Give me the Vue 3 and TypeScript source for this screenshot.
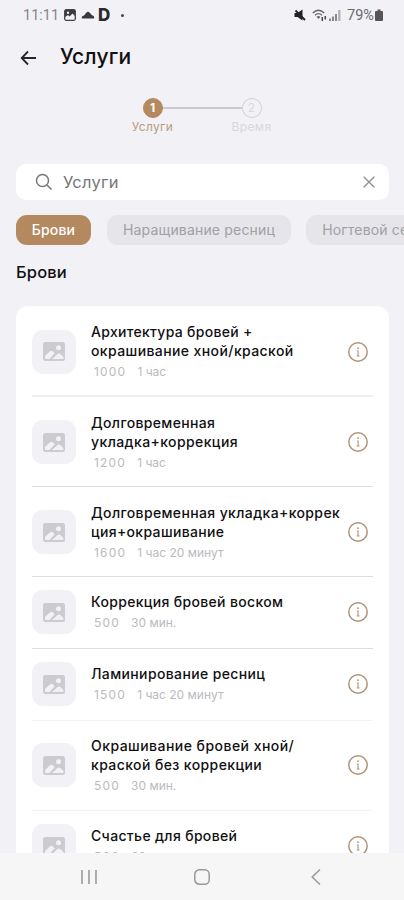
<script setup lang="ts">
interface Service {
  lines: { text: string; spacing: number }[]
  price: string
  duration: string
}

const services: Service[] = [
  {
    lines: [
      { text: 'Архитектура бровей +', spacing: 0.3 },
      { text: 'окрашивание хной/краской', spacing: 0.4 },
    ],
    price: '1000',
    duration: '1 час',
  },
  {
    lines: [
      { text: 'Долговременная', spacing: 0.35 },
      { text: 'укладка+коррекция', spacing: 0.4 },
    ],
    price: '1200',
    duration: '1 час',
  },
  {
    lines: [
      { text: 'Долговременная укладка+коррек', spacing: 0.37 },
      { text: 'ция+окрашивание', spacing: 0.33 },
    ],
    price: '1600',
    duration: '1 час 20 минут',
  },
  { lines: [{ text: 'Коррекция бровей воском', spacing: 0.33 }], price: '500', duration: '30 мин.' },
  { lines: [{ text: 'Ламинирование ресниц', spacing: 0.37 }], price: '1500', duration: '1 час 20 минут' },
  {
    lines: [
      { text: 'Окрашивание бровей хной/', spacing: 0.46 },
      { text: 'краской без коррекции', spacing: 0.4 },
    ],
    price: '500',
    duration: '30 мин.',
  },
  { lines: [{ text: 'Счастье для бровей', spacing: 0.34 }], price: '500', duration: '30 мин.' },
]
</script>

<template>
  <div class="screen">
    <header class="status">
      <span class="clock">11:11</span>
      <svg width="12" height="12" viewBox="0 0 12 12">
        <rect x="0.7" y="0.7" width="10.6" height="10.6" rx="1.5" fill="none" stroke="#444" stroke-width="1.3" />
        <path d="M1 1h10v6L8.5 4.5 5.5 7.5 4 6 1 8z" fill="#3a3a3c" />
        <circle cx="4" cy="3.8" r="1.2" fill="#f2f1f6" />
      </svg>
      <svg class="st-cloud" width="14" height="8" viewBox="0 0 14 8">
        <path d="M1 7.5Q0 5 3 4.5L5.5 1.5Q7 0 8.5 1.5L11 4.2Q14 5 13 7.5z" fill="#3a3a3c" />
      </svg>
      <span class="d">D</span>
      <span class="dot"></span>
      <span class="grow"></span>
      <svg width="12" height="12" viewBox="0 0 12 12">
        <path d="M0.5 4h3L8.5 0.5v11L3.5 8h-3z" fill="#222" />
        <path d="M1.500 1.500l9.500 9.500" stroke="#222" stroke-width="1.8" />
      </svg>
      <svg class="st-wifi" width="15" height="12" viewBox="0 0 15 12">
        <path d="M0.7 4Q6.5-1.5 12.3 4M3 6.2Q6.5 3 10 6.2" fill="none" stroke="#666" stroke-width="1.3" />
        <path d="M6.5 10L4.5 7.7Q6.5 6.3 8.5 7.7z" fill="#666" />
        <path d="M10.3 8v4M13.3 7v3.5" stroke="#444" stroke-width="1.5" />
      </svg>
      <svg class="st-signal" width="12" height="12" viewBox="0 0 12 12">
        <path d="M1 9.5V12M4 7.5V12M7 5V12" stroke="#777" stroke-width="1.7" />
        <path d="M10.3 1V12" stroke="#b0b0b4" stroke-width="2.2" />
      </svg>
      <span class="percent">79%</span>
      <svg width="8" height="12" viewBox="0 0 8 12">
        <path d="M2.5 0.5h3v1.500H7q1 0 1 1v8q0 1-1 1H1q-1 0-1-1V3q0-1 1-1h1.500z" fill="#555" />
      </svg>
    </header>

    <div class="topbar">
      <svg width="18" height="16" viewBox="0 0 18 16">
        <path d="M16 8H2M8 1.5L1.7 8 8 14.5" fill="none" stroke="#26262a" stroke-width="1.8" />
      </svg>
      <h1>Услуги</h1>
    </div>

    <div class="steps">
      <div class="step active">
        <span class="bullet">1</span>
        <span class="label">Услуги</span>
      </div>
      <span class="track"></span>
      <div class="step">
        <span class="bullet">2</span>
        <span class="label">Время</span>
      </div>
    </div>

    <div class="search">
      <svg width="18" height="18" viewBox="0 0 18 18">
        <circle cx="7.5" cy="7.5" r="6" fill="none" stroke="#777" stroke-width="1.5" />
        <path d="M12 12l4.5 4.5" stroke="#777" stroke-width="1.6" />
      </svg>
      <span class="query">Услуги</span>
      <svg width="12" height="12" viewBox="0 0 12 12">
        <path d="M0.7 0.7l10.6 10.6M11.3 0.7L0.7 11.3" stroke="#929296" stroke-width="1.4" />
      </svg>
    </div>

    <nav class="chips">
      <span class="chip on">Брови</span>
      <span class="chip">Наращивание ресниц</span>
      <span class="chip nails">Ногтевой сервис</span>
    </nav>

    <h2>Брови</h2>

    <main class="card">
      <article v-for="(s, i) in services" :key="i" class="row">
        <span class="thumb">
          <svg width="22" height="19" viewBox="0 0 22 19">
            <rect width="22" height="19" rx="2.5" fill="#cbcbd0" />
            <circle cx="15.5" cy="5.7" r="2.5" fill="#f2f2f6" />
            <path d="M2 16V14l5-4.7q1.5-1 2.7 0l2 2L6.5 17H3q-1 0-1-1zM9 17l6-5.2q1-.8 2 0l3.500 3.200V16q0 1-1 1z" fill="#f2f2f6" />
          </svg>
        </span>
        <div class="info">
          <div v-for="l in s.lines" :key="l.text" class="title" :style="{ letterSpacing: l.spacing + 'px' }">{{ l.text }}</div>
          <div class="meta"><span class="price">{{ s.price }}</span><span>{{ s.duration }}</span></div>
        </div>
        <svg width="20" height="20" viewBox="0 0 20 20">
          <circle cx="10" cy="10" r="9.2" fill="none" stroke="#b19478" stroke-width="1.5" />
          <path d="M8.9 9h1.200v5M8.7 14h2.800" fill="none" stroke="#b19478" stroke-width="1.1" />
          <circle cx="10" cy="6.2" r="0.9" fill="#b19478" />
        </svg>
      </article>
    </main>

    <footer class="system">
      <svg width="16" height="16" viewBox="0 0 16 16">
        <path d="M1 1v14M8 1v14M15 1v14" stroke="#a0a0a0" stroke-width="1.7" />
      </svg>
      <svg width="16" height="16" viewBox="0 0 16 16">
        <rect x="0.8" y="0.8" width="14.4" height="14.4" rx="4.5" fill="none" stroke="#999" stroke-width="1.5" />
      </svg>
      <svg width="10" height="16" viewBox="0 0 10 16">
        <path d="M9 0.5L1.2 8 9 15.5" fill="none" stroke="#999" stroke-width="1.5" />
      </svg>
    </footer>
  </div>
</template>

<style>
body {
  background: #f2f1f6;
}
</style>

<style scoped>
.screen {
  width: 404px;
  height: 900px;
  overflow: hidden;
  display: flex;
  flex-direction: column;
  background: #f2f1f6;
  font-family: Inter, 'Noto Sans', sans-serif;
  color: #101012;
}
svg {
  display: block;
  flex: none;
}
span {
  white-space: nowrap;
}
.status {
  height: 30px;
  flex: none;
  display: flex;
  align-items: center;
  box-sizing: border-box;
  padding: 0 21px 0 23px;
}
.clock {
  width: 41px;
  font-family: Roboto, sans-serif;
  font-size: 14.5px;
  color: #85858a;
}
.st-cloud {
  margin-left: 5px;
}
.d {
  margin-left: 3px;
  width: 16px;
  font-size: 17px;
  font-weight: 800;
  color: #2a2a2c;
}
.dot {
  width: 3px;
  height: 3px;
  margin-left: 7px;
  border-radius: 50%;
  background: #444;
}
.grow {
  flex: 1;
}
.st-wifi {
  margin-left: 6px;
}
.st-signal {
  margin-left: 2px;
}
.percent {
  width: 28px;
  margin-left: 6px;
  font-family: Roboto, sans-serif;
  font-size: 14.5px;
  color: #6a6a6e;
}
.topbar {
  height: 55px;
  flex: none;
  display: flex;
  align-items: center;
  gap: 22px;
  padding-left: 20px;
}
h1 {
  margin: -2px 0 0;
  font-size: 21px;
  line-height: 26px;
  letter-spacing: 0.2px;
  font-weight: 500;
}
.steps {
  height: 79px;
  flex: none;
  display: flex;
  justify-content: center;
  padding-top: 13px;
  box-sizing: border-box;
}
.step {
  width: 44px;
  display: flex;
  flex-direction: column;
  align-items: center;
  color: #d8d8dc;
}
.bullet {
  width: 20px;
  height: 20px;
  box-sizing: border-box;
  border: 1.5px solid #d3d3d7;
  border-radius: 50%;
  font-size: 12px;
  line-height: 17px;
  text-align: center;
}
.label {
  margin-top: 1px;
  font-size: 12px;
  line-height: 16px;
  letter-spacing: 0.35px;
}
.active {
  color: #b99c7d;
}
.active .bullet {
  background: #b5895f;
  border-color: #b5895f;
  color: #fff;
  font-weight: 700;
}
.track {
  width: 79px;
  height: 2px;
  margin: 9px -12px 0;
  background: #cbcace;
}
.search {
  height: 36px;
  flex: none;
  margin: 0 15px 0 16px;
  padding: 0 14px 0 19px;
  display: flex;
  align-items: center;
  gap: 10px;
  border-radius: 10px;
  background: #fff;
}
.query {
  flex: 1;
  margin-top: -1px;
  font-size: 16.5px;
  letter-spacing: 0.25px;
  color: #77777b;
}
.chips {
  flex: none;
  display: flex;
  gap: 16px;
  padding-left: 16px;
  margin-top: 15px;
}
.chip {
  flex: none;
  width: 184px;
  height: 30px;
  border-radius: 11px;
  background: #e6e5ea;
  color: #a0a0a5;
  font-size: 14px;
  line-height: 30px;
  letter-spacing: 0.17px;
  text-align: center;
}
.chip.on {
  width: 75px;
  background: #b5895f;
  color: #fff;
  font-weight: 500;
}
.chip.nails {
  width: 152px;
  margin-left: -1px;
}
h2 {
  margin: 17px 0 0 16px;
  flex: none;
  font-size: 16.5px;
  line-height: 20px;
  letter-spacing: 0.15px;
  font-weight: 500;
}
.card {
  flex: 1;
  min-height: 0;
  overflow: hidden;
  margin: 24px 15px 0 16px;
  padding: 1px 16px 0;
  background: #fff;
  border-radius: 12px 12px 0 0;
}
.row {
  display: flex;
  align-items: center;
  box-sizing: border-box;
  min-height: 72px;
  padding: 15px 5px 14px 0;
  border-bottom: 1.5px solid #dedee0;
}
.row:nth-child(-n + 3) {
  min-height: 90px;
}
.row:nth-child(1) {
  border-bottom: 2px solid #efeff1;
}
.row:nth-child(n + 4) {
  padding: 14px 5px 15px 0;
}
.row:nth-child(6) {
  min-height: 90px;
}
.row:nth-child(5),
.row:nth-child(6) {
  border-bottom-color: #f3f3f4;
}
.thumb {
  width: 44px;
  height: 44px;
  margin: -3px 0;
  flex: none;
  display: flex;
  align-items: center;
  justify-content: center;
  border-radius: 11px;
  background: #f2f2f6;
}
.info {
  flex: 1;
  padding-left: 15px;
}
.title {
  font-size: 14px;
  line-height: 19px;
  font-weight: 500;
  white-space: nowrap;
}
.meta {
  display: flex;
  gap: 11px;
  margin-top: 2px;
  padding-left: 3px;
  font-size: 12px;
  line-height: 19px;
  color: #bababe;
}
.price {
  letter-spacing: 1.2px;
}
.system {
  height: 47px;
  flex: none;
  display: flex;
  align-items: center;
  justify-content: space-between;
  box-sizing: border-box;
  padding: 0 83px 0 81px;
  background: #f6f6f6;
}
.system svg:nth-child(2) {
  margin-right: 4px;
}
</style>
